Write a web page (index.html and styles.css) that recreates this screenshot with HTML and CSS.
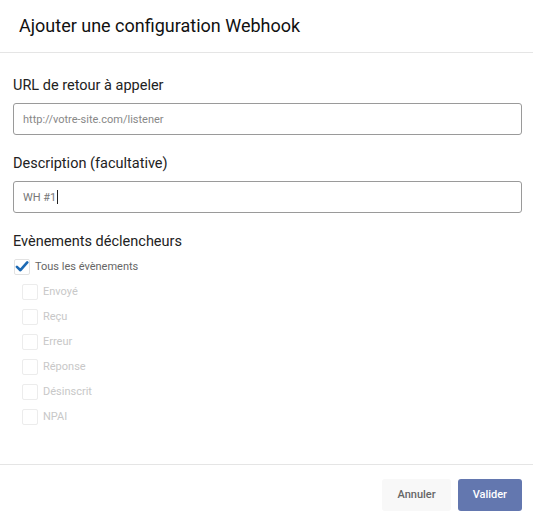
FILE: index.html
```html
<!DOCTYPE html>
<html lang="fr">
<head>
    <meta charset="UTF-8">
    <title>Ajouter une configuration Webhook</title>
    <link rel="stylesheet" href="styles.css">
</head>
<body>
    <section class="modal">
        <header class="modal-head">
            <h1>Ajouter une configuration Webhook</h1>
        </header>
        <div class="modal-body">
            <label class="field-label">URL de retour à appeler</label>
            <input class="field" type="text" placeholder="http://votre-site.com/listener">

            <label class="field-label">Description (facultative)</label>
            <div class="field field-value">WH #1<span class="caret"></span></div>

            <div class="field-label">Evènements déclencheurs</div>
            <ul class="checks">
                <li class="check-all">
                    <span class="box checked">
                        <svg viewBox="0 0 16 16" width="15" height="15"><path d="M2.2 8.4 L6.2 12.2 L14 3.4" fill="none" stroke="#1d6ab4" stroke-width="3" stroke-linecap="round" stroke-linejoin="round"/></svg>
                    </span>
                    Tous les évènements
                </li>
                <li class="check-sub"><span class="box"></span>Envoyé</li>
                <li class="check-sub"><span class="box"></span>Reçu</li>
                <li class="check-sub"><span class="box"></span>Erreur</li>
                <li class="check-sub"><span class="box"></span>Réponse</li>
                <li class="check-sub"><span class="box"></span>Désinscrit</li>
                <li class="check-sub"><span class="box"></span>NPAI</li>
            </ul>
        </div>
        <footer class="modal-foot">
            <a href="javascript:;" class="btn btn-cancel">Annuler</a>
            <a href="javascript:;" class="btn btn-ok">Valider</a>
        </footer>
    </section>
</body>
</html>
```

FILE: styles.css
```css
*{
    margin: 0;
    padding: 0;
    box-sizing: border-box;
}
body{
    font-family: Roboto, "Liberation Sans", sans-serif;
    background: #fff;
    color: #222;
}
.modal{
    width: 533px;
    height: 525px;
    display: flex;
    flex-direction: column;
}
.modal-head{
    height: 53px;
    padding: 14px 19px 0;
    border-bottom: 1px solid #e5e5e5;
}
.modal-head h1{
    font-size: 18px;
    font-weight: 400;
    color: #111;
    line-height: 24px;
}
.modal-body{
    flex: 1;
    padding: 24px 11px 0 13px;
    display: flex;
    flex-direction: column;
}
.field-label{
    display: block;
    font-size: 14.5px;
    line-height: 18px;
    color: #222;
    margin-bottom: 8px;
}
.field{
    display: block;
    width: 509px;
    height: 32px;
    border: 1px solid #9a9a9a;
    border-radius: 3px;
    padding: 0 9px;
    font-family: Roboto, "Liberation Sans", sans-serif;
    font-size: 11px;
    color: #777;
    margin-bottom: 20px;
    outline: none;
}
.field::placeholder{
    color: #888;
}
.field-value{
    display: flex;
    align-items: center;
}
.caret{
    display: inline-block;
    width: 1px;
    height: 14px;
    background: #222;
    margin-left: 1px;
}
.checks{
    list-style: none;
    font-size: 11px;
    margin-top: -5px;
}
.checks li{
    display: flex;
    align-items: center;
    height: 25px;
}
.check-all{
    color: #666;
}
.check-sub{
    color: #c8c8c8;
    padding-left: 9px;
}
.box{
    width: 16px;
    height: 16px;
    border: 1px solid #e2e2e2;
    border-radius: 2px;
    margin-right: 5px;
    display: flex;
    align-items: center;
    justify-content: center;
    background: #fff;
}
.check-all .box{
    margin-left: 1px;
}
.check-sub .box{
    border-color: #ececec;
}
.modal-foot{
    height: 61px;
    border-top: 1px solid #e5e5e5;
    display: flex;
    justify-content: flex-end;
    align-items: flex-start;
    gap: 7px;
    padding: 14px 11px 0 0;
}
.btn{
    display: inline-block;
    height: 32px;
    line-height: 32px;
    padding: 0 15px;
    font-size: 11px;
    font-weight: 500;
    text-decoration: none;
    border-radius: 3px;
}
.btn-cancel{
    background: #f8f8f8;
    color: #666;
}
.btn-ok{
    background: #6377af;
    color: #fff;
}
```
